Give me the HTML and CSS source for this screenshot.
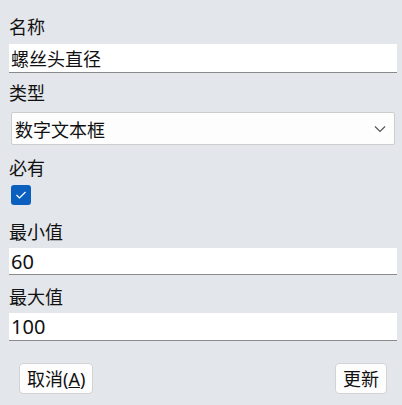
FILE: index.html
```html
<!DOCTYPE html>
<html lang="zh">
<head>
<meta charset="utf-8">
<link rel="stylesheet" href="styles.css">
</head>
<body>
<form class="form">
  <label class="label l-name">名称</label>
  <div class="input i-name">螺丝头直径</div>
  <label class="label l-type">类型</label>
  <div class="select">
    <span>数字文本框</span>
    <svg class="chev" width="12" height="8" viewBox="0 0 12 8"><path d="M1 1.5 L6 6.5 L11 1.5" fill="none" stroke="#555" stroke-width="1.2"/></svg>
  </div>
  <label class="label l-req">必有</label>
  <div class="check">
    <svg width="12" height="10" viewBox="0 0 12 10"><path d="M1.5 5 L4.5 8 L10.5 2" fill="none" stroke="#fff" stroke-width="1.2"/></svg>
  </div>
  <label class="label l-min">最小值</label>
  <div class="input i-min num">60</div>
  <label class="label l-max">最大值</label>
  <div class="input i-max num">100</div>
  <div class="buttons">
    <button type="button" class="btn">取消(<u>A</u>)</button>
    <button type="button" class="btn">更新</button>
  </div>
</form>
</body>
</html>
```
FILE: styles.css
```css
html, body {
  margin: 0;
  padding: 0;
  background: #e3e6ea;
  height: 100%;
}
.form {
  display: flex;
  flex-direction: column;
  padding: 15px 5px 0 9px;
  font-family: "Noto Sans", "Noto Sans CJK SC", sans-serif;
  font-size: 18px;
  color: #111;
}
.label {
  display: block;
  height: 24px;
  line-height: 24px;
}
.input {
  background: #fff;
  border-bottom: 1px solid #8a8a8a;
  padding: 0 2px;
  display: flex;
  align-items: center;
  box-sizing: border-box;
}
.num { font-size: 20px; }
.i-name { height: 29px; margin-top: 5px; }
.l-type { margin-top: 8px; }
.select {
  margin: 7px 2px 0 2px;
  height: 33px;
  box-sizing: border-box;
  background: #fdfdfd;
  border: 1px solid #cdcdcd;
  border-radius: 2px;
  display: flex;
  align-items: center;
  justify-content: space-between;
  padding: 0 8px 0 3px;
}
.chev { margin-top: 1px; }
.l-req { margin-top: 11px; }
.check {
  margin: 5px 0 0 2px;
  width: 20px;
  height: 20px;
  border-radius: 3px;
  background: #0b5fbf;
  display: flex;
  align-items: center;
  justify-content: center;
}
.l-min { margin-top: 15px; }
.i-min { height: 27px; margin-top: 4px; }
.l-max { margin-top: 10px; }
.i-max { height: 28px; margin-top: 4px; }
.buttons {
  display: flex;
  justify-content: space-between;
  margin: 22px 10px 0 10px;
}
.btn {
  font-family: inherit;
  font-size: 18px;
  color: #111;
  height: 31px;
  padding: 0 7px;
  background: #fdfdfd;
  border: 1px solid #d3d3d3;
  border-radius: 4px;
  line-height: 1;
}
```
